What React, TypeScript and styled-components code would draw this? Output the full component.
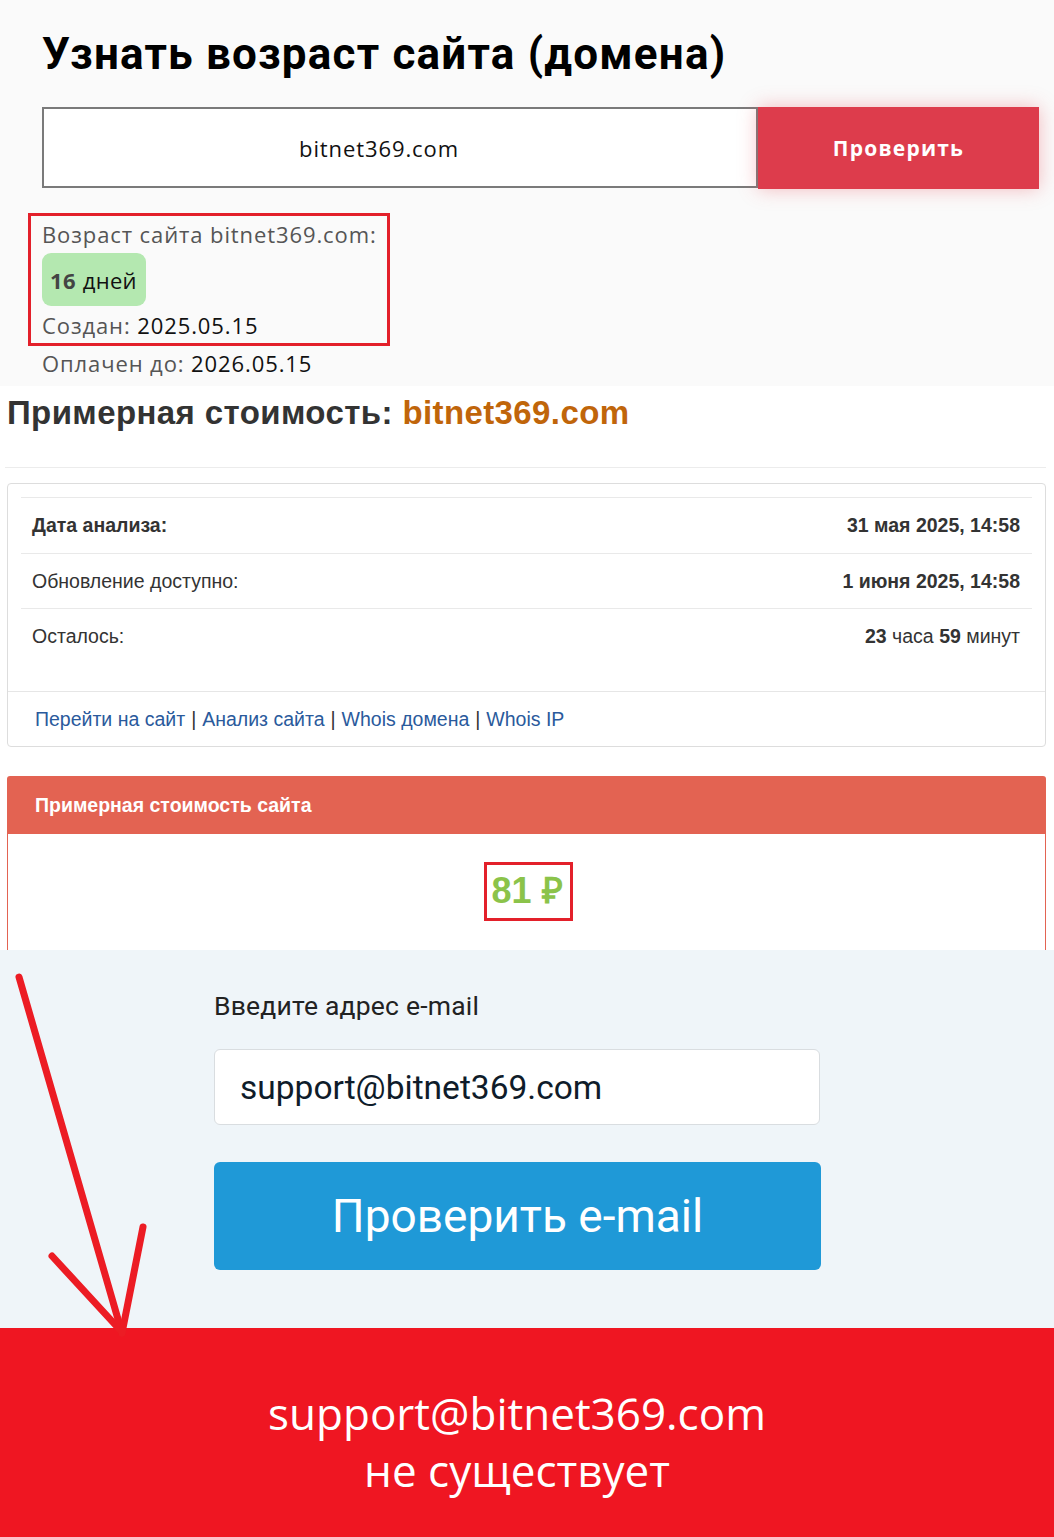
import React from "react";
import styled, { createGlobalStyle } from "styled-components";

const GlobalStyle = createGlobalStyle`
  html, body { margin: 0; padding: 0; background: #ffffff; }
  body { width: 1054px; font-family: "Open Sans", "Liberation Sans", sans-serif; }
  *, *::before, *::after { box-sizing: border-box; }
`;

const Page = styled.div`
  width: 1054px;
  display: flex;
  flex-direction: column;
`;

/* ---------- Section 1: domain age ---------- */
const AgeSection = styled.section`
  background: #fafafa;
  height: 386px;
  padding: 26px 15px 0 28px;
  display: flex;
  flex-direction: column;
  align-items: flex-start;
`;

const Title = styled.h1`
  margin: 0 0 0 14px;
  font-family: Roboto, "Liberation Sans", sans-serif;
  font-weight: 700;
  font-size: 44px;
  line-height: 56px;
  letter-spacing: 1.2px;
  color: #000;
`;

const CheckForm = styled.form`
  display: flex;
  margin: 25px 0 0 14px;
  height: 82px;
  align-items: flex-start;
`;

const DomainInput = styled.input`
  width: 716px;
  height: 81px;
  border: 2px solid #7a7a7a;
  background: #fff;
  text-align: center;
  padding: 0 42px 0 0;
  font-family: "Open Sans", sans-serif;
  font-weight: 400;
  font-size: 22px;
  letter-spacing: 0.9px;
  color: #111;
  outline: none;
`;

const CheckButton = styled.button`
  width: 281px;
  height: 82px;
  border: 0;
  background: #dd3c4c;
  color: #fff;
  font-family: "Open Sans", sans-serif;
  font-weight: 700;
  font-size: 21px;
  letter-spacing: 1.2px;
  box-shadow: 0 0 18px rgba(232, 70, 80, 0.35);
`;

const ResultBox = styled.div`
  margin-top: 24px;
  width: 362px;
  border: 3px solid #e3202a;
  padding: 3px 6px 3px 11px;
  display: flex;
  flex-direction: column;
  align-items: flex-start;
`;

const InfoLine = styled.div<{ $indent?: boolean }>`
  font-family: "Open Sans", sans-serif;
  font-size: 22px;
  line-height: 30px;
  letter-spacing: 0.9px;
  color: #555;
  white-space: nowrap;
  margin-left: ${(p) => (p.$indent ? "14px" : "0")};
  margin-top: ${(p) => (p.$indent ? "2px" : "0")};
`;

const Value = styled.span`
  color: #111;
  font-weight: 500;
`;

const AgeBadge = styled.div`
  margin: 4px 0;
  height: 53px;
  padding: 0 9px 0 8px;
  display: flex;
  align-items: center;
  gap: 7px;
  background: #b4e8b0;
  border-radius: 9px;
  font-family: "Open Sans", sans-serif;
  font-size: 22px;
  letter-spacing: 0.3px;
  color: #111;
  font-weight: 500;
`;

const BadgeNum = styled.span`
  font-weight: 700;
  color: #444;
`;

/* ---------- Section 2: cost estimate ---------- */
const EstimateSection = styled.section`
  background: #fff;
  padding: 8px 8px 0 7px;
  display: flex;
  flex-direction: column;
  font-family: "Liberation Sans", Arial, sans-serif;
`;

const EstimateTitle = styled.h2`
  margin: 0;
  font-size: 33px;
  line-height: 38px;
  letter-spacing: 0.4px;
  font-weight: 700;
  color: #333;
`;

const DomainAccent = styled.span`
  color: #c0650a;
`;

const Rule = styled.hr`
  margin: 35px 0 0 -2px;
  border: 0;
  border-top: 1px solid #ececec;
  height: 0;
`;

const Card = styled.div`
  margin-top: 15px;
  border: 1px solid #dddddd;
  border-radius: 4px;
  display: flex;
  flex-direction: column;
`;

const CardBody = styled.div`
  padding: 13px 13px 28px 13px;
`;

const InfoRow = styled.div`
  height: 56px;
  border-top: 1px solid #e9e9e9;
  padding: 0 12px 0 11px;
  display: flex;
  align-items: center;
  justify-content: space-between;
  font-size: 19.5px;
  color: #333;
  & + & {
    height: 55px;
  }
`;

const Strong = styled.b`
  font-weight: 700;
`;

const CardFooter = styled.div`
  border-top: 1px solid #e6e6e6;
  height: 55px;
  padding-left: 27px;
  display: flex;
  align-items: center;
  font-size: 19.5px;
  color: #333;
  gap: 6px;
`;

const FooterLink = styled.a`
  color: #2a5a9c;
  text-decoration: none;
`;

const PricePanel = styled.div`
  margin-top: 29px;
  display: flex;
  flex-direction: column;
`;

const PriceHeader = styled.div`
  height: 58px;
  background: #e36352;
  border-radius: 3px 3px 0 0;
  padding-left: 28px;
  display: flex;
  align-items: center;
  color: #fff;
  font-weight: 700;
  font-size: 19.5px;
`;

const PriceBody = styled.div`
  border-left: 1px solid #e36352;
  border-right: 1px solid #e36352;
  padding: 28px 0 29px;
  display: flex;
  justify-content: center;
`;

const PriceValue = styled.div`
  border: 3px solid #e3202a;
  height: 59px;
  padding: 0 7px 4px 4px;
  margin-left: 4px;
  display: flex;
  align-items: center;
  color: #8bc34a;
  font-weight: 700;
  font-size: 36px;
`;

/* ---------- Section 3: email check ---------- */
const EmailSection = styled.section`
  position: relative;
  background: #eff5f9;
  height: 378px;
  padding: 41px 0 0 214px;
  display: flex;
  flex-direction: column;
  align-items: flex-start;
`;

const EmailLabel = styled.label`
  font-family: Roboto, "Liberation Sans", sans-serif;
  font-size: 26.5px;
  line-height: 30px;
  letter-spacing: 0.2px;
  color: #222;
`;

const EmailInput = styled.input`
  margin-top: 28px;
  width: 606px;
  height: 76px;
  border: 1px solid #d9dde0;
  border-radius: 6px;
  background: #fff;
  padding: 0 0 0 25px;
  font-family: Roboto, "Liberation Sans", sans-serif;
  font-size: 33.5px;
  color: #0f1c2a;
  outline: none;
`;

const EmailButton = styled.button`
  margin-top: 37px;
  width: 607px;
  height: 108px;
  border: 0;
  border-radius: 6px;
  background: #1f99d7;
  color: #fff;
  font-family: Roboto, "Liberation Sans", sans-serif;
  font-size: 46px;
  font-weight: 400;
`;

const ArrowOverlay = styled.svg`
  position: absolute;
  left: 0;
  top: 0;
  width: 160px;
  height: 390px;
  overflow: visible;
  pointer-events: none;
  z-index: 2;
`;

/* ---------- Section 4: result banner ---------- */
const ResultBanner = styled.section`
  background: #ef1622;
  height: 209px;
  padding: 18px 20px 0 0;
  display: flex;
  flex-direction: column;
  align-items: center;
  justify-content: center;
  color: #fff;
  font-family: "Open Sans", sans-serif;
  font-size: 44px;
  line-height: 57px;
`;

export default function App() {
  return (
    <Page>
      <GlobalStyle />
      <AgeSection>
        <Title>Узнать возраст сайта (домена)</Title>
        <CheckForm onSubmit={(e) => e.preventDefault()}>
          <DomainInput defaultValue="bitnet369.com" />
          <CheckButton type="submit">Проверить</CheckButton>
        </CheckForm>
        <ResultBox>
          <InfoLine>Возраст сайта bitnet369.com:</InfoLine>
          <AgeBadge>
            <BadgeNum>16</BadgeNum>
            <span>дней</span>
          </AgeBadge>
          <InfoLine>
            Создан: <Value>2025.05.15</Value>
          </InfoLine>
        </ResultBox>
        <InfoLine $indent>
          Оплачен до: <Value>2026.05.15</Value>
        </InfoLine>
      </AgeSection>

      <EstimateSection>
        <EstimateTitle>
          Примерная стоимость: <DomainAccent>bitnet369.com</DomainAccent>
        </EstimateTitle>
        <Rule />
        <Card>
          <CardBody>
            <InfoRow>
              <Strong>Дата анализа:</Strong>
              <Strong>31 мая 2025, 14:58</Strong>
            </InfoRow>
            <InfoRow>
              <span>Обновление доступно:</span>
              <Strong>1 июня 2025, 14:58</Strong>
            </InfoRow>
            <InfoRow>
              <span>Осталось:</span>
              <span>
                <Strong>23</Strong> часа <Strong>59</Strong> минут
              </span>
            </InfoRow>
          </CardBody>
          <CardFooter>
            <FooterLink href="#">Перейти на сайт</FooterLink>|
            <FooterLink href="#">Анализ сайта</FooterLink>|
            <FooterLink href="#">Whois домена</FooterLink>|
            <FooterLink href="#">Whois IP</FooterLink>
          </CardFooter>
        </Card>
        <PricePanel>
          <PriceHeader>Примерная стоимость сайта</PriceHeader>
          <PriceBody>
            <PriceValue>81 ₽</PriceValue>
          </PriceBody>
        </PricePanel>
      </EstimateSection>

      <EmailSection>
        <EmailLabel>Введите адрес e-mail</EmailLabel>
        <EmailInput defaultValue="support@bitnet369.com" />
        <EmailButton>Проверить e-mail</EmailButton>
        <ArrowOverlay viewBox="0 0 160 390">
          <g stroke="#ec1c24" strokeWidth="7" strokeLinecap="round" fill="none">
            <line x1="19" y1="27" x2="122" y2="383" />
            <line x1="52" y1="306" x2="121" y2="381" />
            <line x1="143" y1="277" x2="122" y2="383" />
          </g>
        </ArrowOverlay>
      </EmailSection>

      <ResultBanner>
        <div>support@bitnet369.com</div>
        <div>не существует</div>
      </ResultBanner>
    </Page>
  );
}
